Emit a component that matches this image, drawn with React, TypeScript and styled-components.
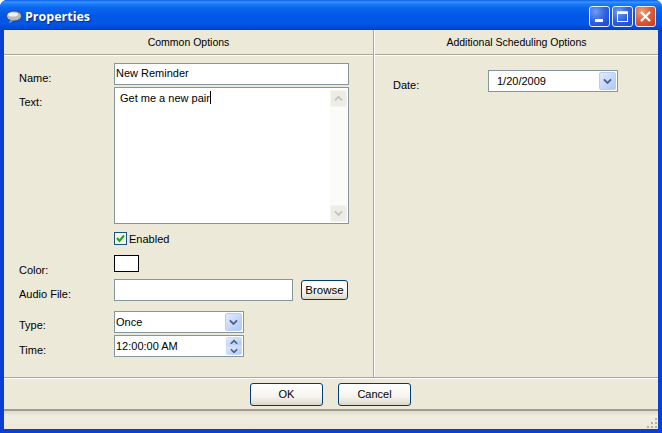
import React from 'react';
import styled, { createGlobalStyle } from 'styled-components';

const GlobalStyle = createGlobalStyle`
  html, body { margin: 0; padding: 0; background: #fff; }
  * { box-sizing: border-box; }
`;

const Window = styled.div`
  width: 662px;
  height: 433px;
  display: flex;
  flex-direction: column;
  overflow: hidden;
  border-radius: 7px 7px 0 0;
  background: #0a3fd6;
  font-family: "Liberation Sans", Arial, sans-serif;
  font-size: 11px;
  color: #000;
`;

const TitleBar = styled.div`
  height: 30px;
  flex: none;
  display: flex;
  align-items: center;
  padding: 3px 6px 0 6px;
  background: linear-gradient(to bottom, #0a5fe8 0, #3a93ff 2px, #1a7cf8 4px, #0a66ee 8px, #0058e6 16px, #0256e8 24px, #0049d6 28px, #0040c8 30px);
`;

const TitleText = styled.div`
  margin-left: 3px;
  flex: 1;
  color: #fff;
  font-family: "Open Sans", "Liberation Sans", sans-serif;
  font-weight: 700;
  font-size: 12.5px;
  text-shadow: 1px 1px 1px #0a2a90;
`;

const CaptionButtons = styled.div`
  display: flex;
  gap: 2px;
`;

const CaptionButton = styled.div<{ $close?: boolean }>`
  width: 21px;
  height: 21px;
  display: flex;
  align-items: center;
  justify-content: center;
  border: 1px solid #e8eefc;
  border-radius: 3px;
  background: ${p =>
    p.$close
      ? 'radial-gradient(circle at 30% 25%, #f0a080 0, #e0603c 45%, #c23a18 100%)'
      : 'radial-gradient(circle at 30% 25%, #6f9cf5 0, #2f62e0 50%, #1c45c8 100%)'};
`;

const Frame = styled.div`
  flex: 1;
  min-height: 0;
  display: flex;
  flex-direction: column;
  margin: 0 4px 4px 4px;
  background: #ece9d8;
`;

const Columns = styled.div`
  height: 348px;
  flex: none;
  display: flex;
  border-bottom: 1px solid #aca899;
`;

const LeftPane = styled.div`
  width: 370px;
  flex: none;
  border-right: 1px solid #aca899;
`;

const RightPane = styled.div`
  flex: 1;
  border-left: 1px solid #fff;
`;

const PaneHeader = styled.div`
  height: 25px;
  display: flex;
  align-items: center;
  justify-content: center;
  padding-bottom: 1px;
  font-size: 10.5px;
  border-bottom: 1px solid #aca899;
  box-shadow: 0 1px 0 #fff;
`;

const FormGrid = styled.div`
  display: grid;
  grid-template-columns: 95px 235px;
  grid-template-rows: 22px 139px 22px 26px 29px 32px 24px;
  padding: 8px 0 0 15px;
`;

const FieldLabel = styled.div<{ $top?: number }>`
  padding-top: ${p => p.$top ?? 0}px;
  line-height: 13px;
  white-space: nowrap;
`;

const Spot = styled.div<{ $top: number }>`
  margin-top: ${p => p.$top}px;
  display: flex;
  align-items: center;
  align-self: start;
`;

const TextBox = styled.div<{ $width?: number; $height?: number }>`
  width: ${p => p.$width ?? 235}px;
  height: ${p => p.$height ?? 22}px;
  flex: none;
  display: flex;
  align-items: center;
  padding: 0 0 2px 1px;
  background: #fff;
  border: 1px solid #84979f;
`;

const MemoBox = styled.div`
  width: 235px;
  height: 137px;
  display: flex;
  padding: 2px 1px 1px 5px;
  background: #fff;
  border: 1px solid #84979f;
`;

const MemoText = styled.div`
  flex: 1;
  padding-top: 1px;
  line-height: 13px;
`;

const Caret = styled.span`
  display: inline-block;
  width: 1px;
  height: 13px;
  vertical-align: -2px;
  background: #000;
`;

const ScrollTrack = styled.div`
  width: 17px;
  display: flex;
  flex-direction: column;
  justify-content: space-between;
  background: #fbfbf8;
`;

const ScrollArrow = styled.div`
  height: 17px;
  display: flex;
  align-items: center;
  justify-content: center;
  background: #eeede5;
  border: 1px solid #f4f3ee;
  border-radius: 2px;
`;

const CheckBox = styled.div`
  width: 13px;
  height: 13px;
  display: flex;
  align-items: center;
  justify-content: center;
  margin-right: 2px;
  background: #f4f4ee;
  border: 1px solid #1c5180;
`;

const Swatch = styled.div`
  width: 25px;
  height: 17px;
  background: #fff;
  border: 1px solid #000;
`;

const Button = styled.div<{ $width: number; $height: number }>`
  width: ${p => p.$width}px;
  height: ${p => p.$height}px;
  display: flex;
  align-items: center;
  justify-content: center;
  border: 1px solid #003c74;
  border-radius: 3px;
  background: linear-gradient(to bottom, #fff 0, #f5f4ee 60%, #dcd8c8 100%);
`;

const BrowseButton = styled(Button)`
  margin-left: 8px;
  font-size: 11.5px;
`;

const ComboBox = styled(TextBox)`
  padding: 1px;
  justify-content: space-between;
`;

const ComboArrow = styled.div`
  width: 17px;
  height: 18px;
  display: flex;
  align-items: center;
  justify-content: center;
  border: 1px solid #b9cdf5;
  border-radius: 2px;
  background: linear-gradient(to bottom right, #e1eafe, #aec8f7);
`;

const SpinButtons = styled.div`
  width: 16px;
  height: 18px;
  display: flex;
  flex-direction: column;
  border-radius: 2px;
  overflow: hidden;
`;

const SpinPart = styled.div`
  flex: 1;
  display: flex;
  align-items: center;
  justify-content: center;
  border: 1px solid #cbdcf9;
  background: linear-gradient(to bottom right, #e1eafe, #aec8f7);
`;

const DateRow = styled.div`
  display: flex;
  padding: 15px 0 0 18px;
`;

const DateLabel = styled.div`
  width: 95px;
  padding-top: 9px;
  line-height: 13px;
`;

const DateText = styled.span`
  padding-left: 7px;
`;

const Footer = styled.div`
  height: 33px;
  flex: none;
  display: flex;
  align-items: center;
  justify-content: center;
  gap: 15px;
  padding: 0 1px 0 0;
  border-top: 1px solid #fff;
  border-bottom: 2px solid #a09c8c;
`;

const StatusBar = styled.div`
  flex: 1;
  display: flex;
  justify-content: flex-end;
  align-items: flex-end;
  background: linear-gradient(to bottom, #dedbca 0, #f0eee2 5px, #ece9d8 100%);
`;

const Grip = styled.svg`
  width: 12px;
  height: 12px;
`;

const Chevron = ({ up, color = '#4d6185', size = 9 }: { up?: boolean; color?: string; size?: number }) => (
  <svg width={size} height={size * 0.7} viewBox="0 0 10 7">
    <path d={up ? 'M1 6 L5 2 L9 6' : 'M1 1.5 L5 5.5 L9 1.5'} fill="none" stroke={color} strokeWidth="2" />
  </svg>
);

const App = () => (
  <>
    <GlobalStyle />
    <Window>
      <TitleBar>
        <svg width="16" height="14" viewBox="0 0 16 14">
          <ellipse cx="8" cy="6" rx="7.5" ry="5" fill="#b8bcc0" stroke="#3a4048" strokeWidth="0.8" />
          <ellipse cx="7" cy="4.5" rx="5" ry="2" fill="#eef0f2" />
          <path d="M4 10 L3 13.5 L8 10.5 Z" fill="#8a8f96" />
        </svg>
        <TitleText>Properties</TitleText>
        <CaptionButtons>
          <CaptionButton>
            <svg width="13" height="13" viewBox="0 0 13 13">
              <rect x="2" y="9" width="8" height="3" fill="#fff" />
            </svg>
          </CaptionButton>
          <CaptionButton>
            <svg width="13" height="13" viewBox="0 0 13 13">
              <rect x="1.5" y="2" width="10" height="9.5" fill="none" stroke="#fff" />
              <rect x="1" y="1.5" width="11" height="2.5" fill="#fff" />
            </svg>
          </CaptionButton>
          <CaptionButton $close>
            <svg width="13" height="13" viewBox="0 0 13 13">
              <path d="M2 2 L11 11 M11 2 L2 11" stroke="#fff" strokeWidth="2.2" />
            </svg>
          </CaptionButton>
        </CaptionButtons>
      </TitleBar>
      <Frame>
        <Columns>
          <LeftPane>
            <PaneHeader>Common Options</PaneHeader>
            <FormGrid>
              <FieldLabel $top={9}>Name:</FieldLabel>
              <TextBox>New Reminder</TextBox>

              <FieldLabel $top={11}>Text:</FieldLabel>
              <Spot $top={2}>
                <MemoBox>
                  <MemoText>
                    Get me a new pair<Caret />
                  </MemoText>
                  <ScrollTrack>
                    <ScrollArrow><Chevron up color="#c4c4b8" /></ScrollArrow>
                    <ScrollArrow><Chevron color="#c4c4b8" /></ScrollArrow>
                  </ScrollTrack>
                </MemoBox>
              </Spot>

              <span />
              <Spot $top={8}>
                <CheckBox>
                  <svg width="9" height="9" viewBox="0 0 9 9">
                    <path d="M1 4 L3.5 7 L8 1.5" fill="none" stroke="#21a121" strokeWidth="2" />
                  </svg>
                </CheckBox>
                Enabled
              </Spot>

              <FieldLabel $top={18}>Color:</FieldLabel>
              <Spot $top={9}><Swatch /></Spot>

              <FieldLabel $top={16}>Audio File:</FieldLabel>
              <Spot $top={7}>
                <TextBox $width={179} />
                <BrowseButton $width={47} $height={20}>Browse</BrowseButton>
              </Spot>

              <FieldLabel $top={18}>Type:</FieldLabel>
              <Spot $top={10}>
                <ComboBox $width={130}>
                  Once
                  <ComboArrow><Chevron /></ComboArrow>
                </ComboBox>
              </Spot>

              <FieldLabel $top={11}>Time:</FieldLabel>
              <Spot $top={2}>
                <ComboBox $width={130}>
                  12:00:00 AM
                  <SpinButtons>
                    <SpinPart><Chevron up size={8} /></SpinPart>
                    <SpinPart><Chevron size={8} /></SpinPart>
                  </SpinButtons>
                </ComboBox>
              </Spot>
            </FormGrid>
          </LeftPane>
          <RightPane>
            <PaneHeader>Additional Scheduling Options</PaneHeader>
            <DateRow>
              <DateLabel>Date:</DateLabel>
              <ComboBox $width={130}>
                <DateText>1/20/2009</DateText>
                <ComboArrow><Chevron /></ComboArrow>
              </ComboBox>
            </DateRow>
          </RightPane>
        </Columns>
        <Footer>
          <Button $width={73} $height={23}>OK</Button>
          <Button $width={73} $height={23}>Cancel</Button>
        </Footer>
        <StatusBar>
          <Grip viewBox="0 0 12 12">
            <g fill="#b5b2a2">
              <rect x="9" y="1" width="2" height="2" />
              <rect x="5" y="5" width="2" height="2" />
              <rect x="9" y="5" width="2" height="2" />
              <rect x="1" y="9" width="2" height="2" />
              <rect x="5" y="9" width="2" height="2" />
              <rect x="9" y="9" width="2" height="2" />
            </g>
          </Grip>
        </StatusBar>
      </Frame>
    </Window>
  </>
);

export default App;
